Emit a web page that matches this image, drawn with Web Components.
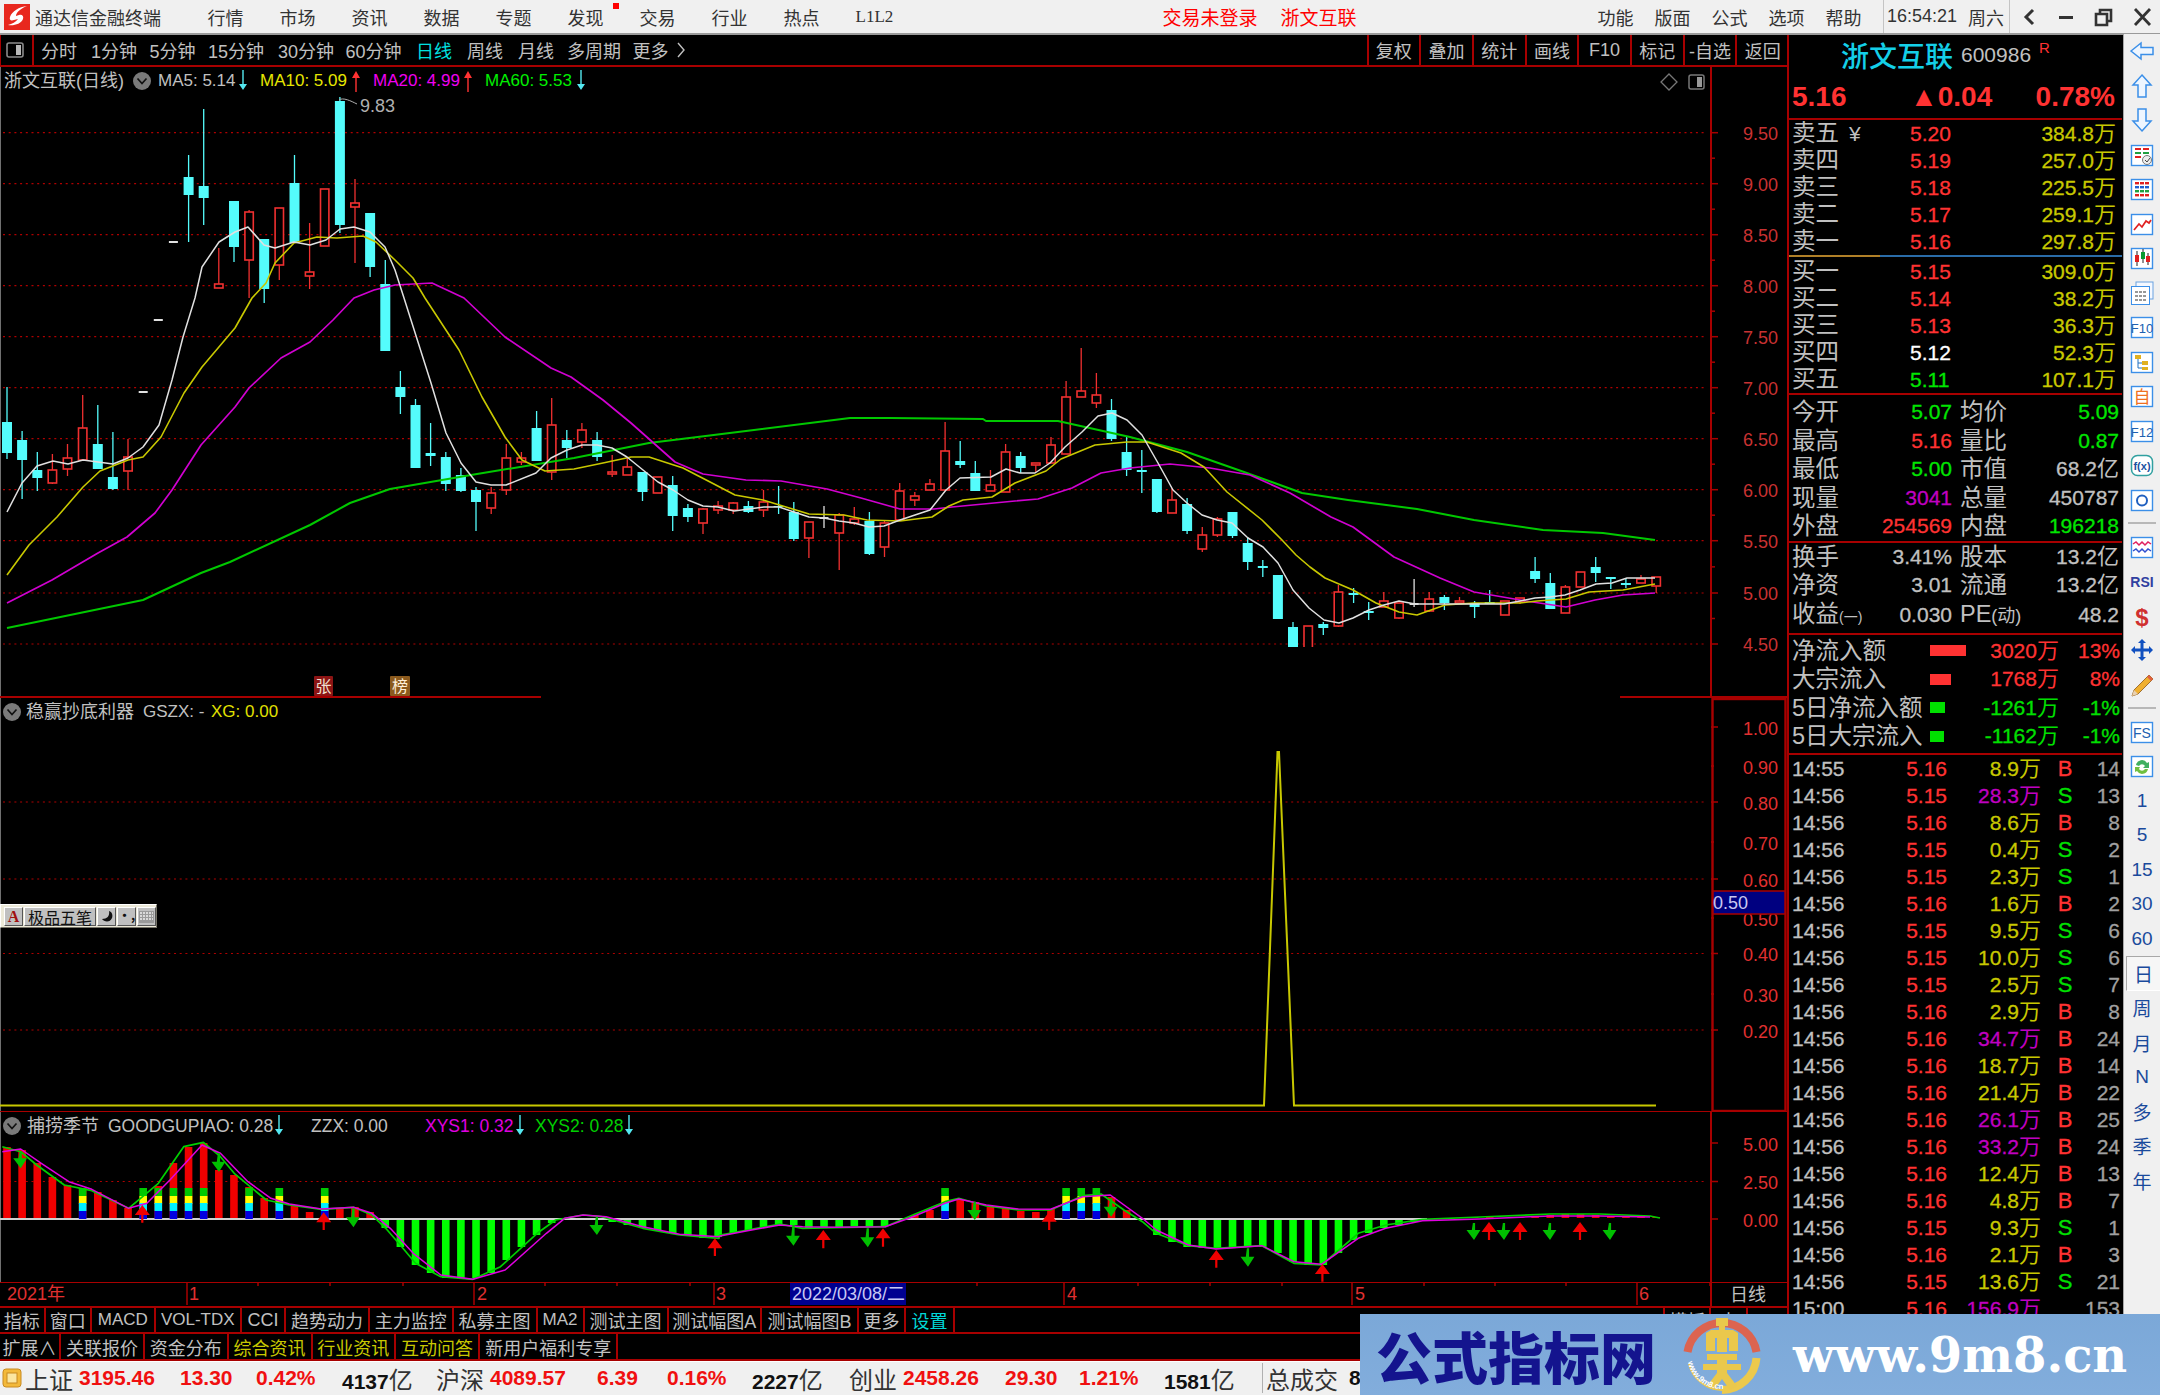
<!DOCTYPE html>
<html lang="zh"><head><meta charset="utf-8"><title>通达信金融终端</title>
<style>
html,body{margin:0;padding:0;background:#000;overflow:hidden;font-family:"Liberation Sans","Noto Sans CJK SC",sans-serif}
</style></head><body>
<tdx-app>
  <tdx-titlebar slot="title"></tdx-titlebar>
  <div slot="left">
    <tdx-periodbar></tdx-periodbar>
    <tdx-price-pane></tdx-price-pane>
    <tdx-signal-pane></tdx-signal-pane>
    <tdx-season-pane></tdx-season-pane>
    <tdx-daterow></tdx-daterow>
    <tdx-tabrow h="26">
      <tdx-tab w="45.5">指标</tdx-tab><tdx-tab w="46.5">窗口</tdx-tab><tdx-tab w="63.6" fs="17">MACD</tdx-tab><tdx-tab w="86.4" fs="17">VOL-TDX</tdx-tab><tdx-tab w="44">CCI</tdx-tab><tdx-tab w="84">趋势动力</tdx-tab><tdx-tab w="83.6">主力监控</tdx-tab><tdx-tab w="84">私募主图</tdx-tab><tdx-tab w="47" fs="17">MA2</tdx-tab><tdx-tab w="84">测试主图</tdx-tab><tdx-tab w="93.5">测试幅图A</tdx-tab><tdx-tab w="96.7">测试幅图B</tdx-tab><tdx-tab w="47.7">更多</tdx-tab><tdx-tab w="48.2" c="#00d8d8">设置</tdx-tab><tdx-tab w="710.4"></tdx-tab><tdx-tab w="46">模板</tdx-tab><tdx-tab w="37">十</tdx-tab>
    </tdx-tabrow>
    <tdx-tabrow h="27">
      <tdx-tab w="61">扩展∧</tdx-tab><tdx-tab w="84">关联报价</tdx-tab><tdx-tab w="83.6">资金分布</tdx-tab><tdx-tab w="84" c="#c8c800">综合资讯</tdx-tab><tdx-tab w="83.3" c="#c8c800">行业资讯</tdx-tab><tdx-tab w="84" c="#c8c800">互动问答</tdx-tab><tdx-tab w="138.5">新用户福利专享</tdx-tab>
    </tdx-tabrow>
  </div>
  <tdx-quote slot="quote"></tdx-quote>
  <tdx-sidebar slot="side"></tdx-sidebar>
  <tdx-statusbar slot="status"></tdx-statusbar>
  <tdx-ime slot="overlay"></tdx-ime>
  <tdx-banner slot="overlay"></tdx-banner>
</tdx-app>
<script>
const FONT='"Liberation Sans","Noto Sans CJK SC",sans-serif';
const RED='#ff3232',AX='#a80000',GRID='#b00000',CY='#54fcfc';
function reg(name,render){customElements.define(name,class extends HTMLElement{connectedCallback(){if(!this.shadowRoot){this.attachShadow({mode:'open'}).innerHTML=render(this);}}});}

reg('tdx-app',()=>`<style>
:host{display:grid;width:2160px;height:1395px;position:relative;overflow:hidden;background:#000;grid-template-columns:1788px 335px 37px;grid-template-rows:35px 1324px 36px}
.t{grid-column:1/4}.s{grid-column:1/4}
.side{grid-row:2/4;grid-column:3}
.st{grid-row:3;grid-column:1/3}
</style>
<div class="t"><slot name="title"></slot></div>
<div class="l"><slot name="left"></slot></div>
<div class="q"><slot name="quote"></slot></div>
<div class="side"><slot name="side"></slot></div>
<div class="st"><slot name="status"></slot></div>
<slot name="overlay"></slot>`);

/* ---------- title bar ---------- */
reg('tdx-titlebar',()=>{
 const menu=['行情','市场','资讯','数据','专题','发现','交易','行业','热点','L1L2'];
 const m2=['功能','版面','公式','选项','帮助'];
 return `<style>
:host{display:flex;align-items:center;height:35px;box-sizing:border-box;background:#f0f0f0;border-bottom:2px solid #9a9a9a;color:#333;font:18px ${FONT}}
svg{display:block;flex:none}
.logo{margin-left:4px}.name{margin-left:5px;width:172.5px;flex:none}
.m{display:flex;gap:36px;align-items:center}.m span{width:36px;position:relative;white-space:nowrap}
.m i{position:absolute;left:45px;top:-1px;width:6px;height:6px;background:#f00;margin-top:0}
.red{color:#f00;font-size:19px;white-space:nowrap}
.r{margin-left:auto;display:flex;align-items:center}
.m2{display:flex;gap:21px;margin-right:21.5px}
.clk{border-left:1px solid #c4c4c4;border-right:1px solid #c4c4c4;height:33px;display:flex;align-items:center;padding:0 5px 0 3px;gap:11px;white-space:nowrap}
.win{display:flex;align-items:center;margin-right:-2px}
.win svg{width:38px;height:24px}
.l12{font-size:17px;line-height:22px;font-family:"Liberation Serif",serif}
</style>
<svg class="logo" width="26" height="26" viewBox="0 0 26 26"><rect width="26" height="26" fill="#e8281e"/><path d="M23 2C15 3 8 7 6 13c-1 3 1 4 4 3l4-1c-2 3-6 5-10 6 6 1 13-1 15-6 1-3-1-5-4-4l-3 1c0-4 6-8 11-10z" fill="#fff"/></svg>
<div class="name">通达信金融终端</div>
<div class="m">${menu.map(t=>`<span class="${t=='L1L2'?'l12':''}">${t}${t=='发现'?'<i></i>':''}</span>`).join('')}</div>
<span class="red" style="margin-left:271px">交易未登录</span><span class="red" style="margin-left:23px">浙文互联</span>
<div class="r"><div class="m2">${m2.map(t=>`<span>${t}</span>`).join('')}</div>
<div class="clk"><span>16:54:21</span><span>周六</span></div>
<div class="win">
<svg viewBox="0 0 38 24"><path d="M23 5l-7 7 7 7" fill="none" stroke="#333" stroke-width="3"/></svg>
<svg viewBox="0 0 38 24"><rect x="11" y="11" width="14" height="3" fill="#333"/></svg>
<svg viewBox="0 0 38 24"><path d="M10 9h11v11H10z M14 9V5h11v11h-4" fill="none" stroke="#333" stroke-width="2.6"/></svg>
<svg viewBox="0 0 38 24"><path d="M11 4l15 16M26 4L11 20" fill="none" stroke="#333" stroke-width="2.8"/></svg>
</div></div>`});

/* ---------- period toolbar ---------- */
reg('tdx-periodbar',()=>{
 const p=[['分时',42],['1分钟',92],['5分钟',150.6],['15分钟',209],['30分钟',279],['60分钟',346.6],['日线',417],['周线',468],['月线',519],['多周期',568],['更多',633.6]];
 const r=['复权','叠加','统计','画线','F10','标记','-自选','返回'];
 let left=`<div class="ic"><svg width="18" height="16" viewBox="0 0 18 16"><rect x="1" y="1" width="16" height="14" rx="2" fill="none" stroke="#8a8a8a" stroke-width="1.6"/><rect x="10" y="3" width="5" height="10" fill="#b8b8b8"/></svg></div>`;
 let items=p.map((a,i)=>{const nx=i<p.length-1?p[i+1][1]:680;return `<span style="width:${nx-a[1]}px;color:${a[0]=='日线'?'#00e0e0':'#c0c0c0'}">${a[0]}</span>`}).join('');
 return `<style>
:host{display:flex;height:32px;box-sizing:border-box;background:#000;border-bottom:2px solid ${AX};color:#c0c0c0;font:18px ${FONT};align-items:center}
.ic{width:34px;height:30px;box-sizing:border-box;border-right:2px solid ${AX};border-left:1px solid ${AX};display:flex;align-items:center;justify-content:center;padding-right:3px;flex:none}
.p{display:flex;padding-left:7px;width:640px;flex:none}.p span{white-space:nowrap;flex:none}
.r{margin-left:auto;display:flex;height:30px}
.r span{width:50.7px;border-left:2px solid ${AX};display:flex;align-items:center;justify-content:center;white-space:nowrap}
</style>${left}<div class="p">${items}</div>
<svg style="margin-left:-4px" width="9" height="16" viewBox="0 0 9 16"><path d="M1 1l6 7-6 7" fill="none" stroke="#c0c0c0" stroke-width="1.4"/></svg>
<div class="r">${r.map(t=>`<span>${t}</span>`).join('')}</div>`});

/* ---------- svg helpers ---------- */
const T=(x,y,s,c,a='start',sz=18)=>`<text x="${x}" y="${y}" fill="${c}" text-anchor="${a}" font-size="${sz}" dominant-baseline="central">${s}</text>`;
const L=(x1,y1,x2,y2,c,w=1,extra='')=>`<line x1="${x1}" y1="${y1}" x2="${x2}" y2="${y2}" stroke="${c}" stroke-width="${w}" ${extra}/>`;
const DOT='stroke-dasharray="2 3.7"';
const PL=(pts,c,w=1.6)=>`<polyline points="${pts.map(p=>p.map(v=>+v.toFixed(1)).join(',')).join(' ')}" fill="none" stroke="${c}" stroke-width="${w}" stroke-linejoin="round"/>`;
const SX=i=>7+15.13*i;

/* candle data: index, body top, body bottom, wick top, wick bottom, kind */
const CD=[[0,422,453,387,459,'c'],[1,440,460,431,499,'c'],[2,470,478,452,491,'c'],[3,470,483,454,484,'r'],[4,458,469,444,476,'r'],[5,428,460,395,460,'r'],[6,444,469,405,469,'c'],[7,477,489,432,490,'c'],[8,457,471,439,490,'r'],
[9,391,393,391,393,'w'],[10,319,321,319,321,'w'],[11,241,243,241,243,'w'],
[12,177,195,155,242,'c'],[13,186,198,109,225,'c'],[14,284,288,248,288,'r'],[15,201,247,201,262,'c'],[16,212,260,210,298,'r'],[17,239,289,239,303,'c'],[18,208,265,208,280,'r'],[19,183,243,155,243,'c'],[20,272,276,223,289,'r'],[21,189,246,189,246,'r'],[22,101,225,97,233,'c'],[23,203,207,179,263,'r'],[24,213,267,213,277,'c'],[25,284,351,260,351,'c'],[26,387,397,371,414,'c'],[27,405,468,399,468,'c'],[28,453,456,423,466,'c'],[29,457,484,452,491,'c'],[30,475,491,468,492,'c'],[31,490,502,487,531,'c'],[32,493,508,487,514,'r'],[33,458,490,444,495,'r'],[34,458,462,452,465,'r'],[35,428,461,411,461,'c'],[36,425,472,398,480,'r'],[37,440,448,430,458,'c'],[38,430,442,423,448,'r'],[39,440,457,432,461,'c'],[40,472,474,455,477,'r'],[41,467,475,457,475,'r'],[42,472,492,472,501,'c'],[43,477,493,477,493,'r'],[44,485,516,476,531,'c'],[45,508,517,504,522,'c'],[46,509,523,508,534,'r'],[47,506,510,501,514,'r'],[48,503,510,502,514,'r'],[49,506,512,501,513,'c'],[50,502,510,490,517,'r'],[51,506,507,486,514,'c'],[52,512,539,502,541,'c'],[53,522,538,522,558,'r'],[54,517,519,506,528,'w'],[55,515,533,513,570,'r'],[56,519,523,507,525,'r'],[57,521,554,512,555,'c'],[58,523,547,521,557,'r'],[59,491,520,483,520,'r'],[60,496,500,492,506,'r'],[61,484,490,479,490,'r'],[62,451,490,422,490,'r'],[63,461,465,441,468,'c'],[64,473,491,461,491,'c'],[65,485,491,470,491,'r'],[66,452,492,444,492,'r'],[67,456,468,452,473,'c'],[68,463,465,463,472,'r'],[69,445,463,437,463,'r'],[70,397,454,381,454,'r'],[71,391,397,348,397,'r'],[72,395,403,373,408,'r'],[73,410,439,399,441,'c'],[74,452,470,437,476,'c'],[75,470,472,450,493,'c'],[76,479,512,479,513,'c'],[77,500,513,488,513,'r'],[78,504,531,498,534,'c'],[79,535,549,527,552,'r'],[80,519,535,517,537,'r'],[81,512,536,512,538,'c'],[82,543,562,537,570,'c'],[83,566,568,560,577,'c'],[84,575,619,575,619,'c'],[85,627,648,622,648,'c'],[86,626,648,626,648,'r'],[87,624,628,622,635,'c'],[88,592,626,585,627,'r'],[89,593,595,588,603,'c'],[90,611,613,602,620,'c'],[91,601,607,592,607,'r'],[92,603,618,603,619,'r'],[93,603,605,579,607,'w'],[94,599,611,592,612,'r'],[95,597,603,595,610,'c'],[96,601,603,597,603,'r'],[97,603,607,601,618,'c'],[98,602,604,590,604,'c'],[99,601,615,601,615,'r'],[100,598,602,598,604,'r'],[101,571,579,557,583,'c'],[102,583,609,573,609,'c'],[103,587,613,585,613,'r'],[104,572,587,572,587,'r'],[105,567,573,557,582,'c'],[106,577,579,577,589,'c'],[107,583,585,578,588,'c'],[108,579,583,575,583,'r'],[109,577,586,577,593,'r']];
const MA5=[[7,512],[22,483],[37,466],[53,461],[68,464],[83,460],[98,462],[113,464],[128,458],[143,447],[159,425],[172,380],[183,337],[195,298],[202,267],[219,242],[235,232],[248,227],[264,245],[275,248],[294,242],[310,245],[326,240],[340,229],[354,227],[370,232],[385,247],[395,270],[404,298],[431,383],[446,433],[461,463],[476,482],[491,485],[506,485],[536,473],[551,458],[567,450],[582,445],[597,445],[612,448],[627,457],[643,470],[658,482],[673,490],[688,500],[703,506],[718,507],[734,511],[749,509],[764,507],[779,507],[794,512],[809,517],[824,518],[839,521],[854,523],[869,527],[884,526],[900,520],[915,515],[930,510],[946,490],[960,478],[991,477],[1006,469],[1020,473],[1035,473],[1050,463],[1065,447],[1082,432],[1098,416],[1112,413],[1127,420],[1142,435],[1158,463],[1173,490],[1187,503],[1202,515],[1217,520],[1232,523],[1248,538],[1263,547],[1278,563],[1293,590],[1309,608],[1324,620],[1339,623],[1353,618],[1369,610],[1384,605],[1399,601],[1415,604],[1460,604],[1504,604],[1520,601],[1535,598],[1550,597],[1565,595],[1580,590],[1596,584],[1612,583],[1627,578],[1655,578]];
const MA10=[[7,575],[29,545],[57,517],[83,487],[100,471],[128,460],[143,457],[161,437],[184,393],[202,367],[235,328],[252,298],[266,283],[275,263],[294,243],[317,237],[337,238],[363,236],[376,242],[395,260],[413,278],[425,298],[459,350],[482,397],[505,437],[522,460],[545,471],[574,469],[603,463],[631,457],[649,457],[683,468],[712,483],[735,495],[763,500],[786,507],[809,514],[844,515],[867,520],[900,521],[932,517],[949,506],[963,500],[992,497],[1015,483],[1046,471],[1061,459],[1095,445],[1127,442],[1147,442],[1181,453],[1204,467],[1227,492],[1262,520],[1282,540],[1296,555],[1310,567],[1325,578],[1353,590],[1376,603],[1399,612],[1417,615],[1445,605],[1474,603],[1520,603],[1537,601],[1566,599],[1589,592],[1623,590],[1655,584]];
const MA20=[[7,603],[52,580],[98,553],[127,537],[155,513],[172,490],[201,445],[235,407],[249,388],[281,358],[310,342],[333,320],[354,298],[374,290],[395,285],[432,283],[464,298],[505,337],[551,368],[571,377],[603,400],[631,423],[675,462],[703,474],[746,480],[781,481],[827,489],[861,498],[900,509],[934,509],[952,507],[1015,501],[1038,499],[1072,488],[1101,473],[1130,468],[1170,464],[1210,468],[1250,475],[1290,493],[1331,517],[1353,527],[1394,557],[1440,578],[1474,592],[1526,601],[1566,607],[1595,600],[1623,595],[1655,593]];
const MA60=[[7,628],[143,600],[201,573],[230,562],[310,525],[350,503],[390,489],[471,475],[574,458],[649,443],[746,431],[850,418],[890,418],[983,419],[986,421],[1058,421],[1130,437],[1187,452],[1244,472],[1302,493],[1348,500],[1417,509],[1474,520],[1543,530],[1603,533],[1655,540]];

/* ---------- legend ---------- */
reg('tdx-legend',()=>`<style>:host{position:absolute;left:0;top:0;right:0;display:flex;align-items:center;font:18px ${FONT};white-space:nowrap;color:#c0c0c0;height:28px}</style><slot></slot>`);
reg('tdx-lg',h=>{
 const w=h.getAttribute('w'),c=h.getAttribute('c')||'#c0c0c0',ar=h.getAttribute('ar'),fs=h.getAttribute('fs')||18;
 const arrow=ar?`<svg width="8" height="22" viewBox="0 0 8 22" style="position:absolute;right:${h.getAttribute('ax')||0}px;top:3px">${ar=='d'?`<path d="M3.3 0h1.4v14H8L4 20 0 14h3.3z" fill="#54e8f0"/>`:`<path d="M3.3 22h1.4V8H8L4 1 0 8h3.3z" fill="#ff3232"/>`}</svg>`:'';
 return `<style>:host{display:block;flex:none;width:${w}px;color:${c};font-size:${fs}px;position:relative;height:28px;line-height:28px}</style><slot></slot>${arrow}`});
reg('tdx-updown',()=>`<style>:host{display:block;flex:none;width:18px;height:18px;border-radius:50%;background:#7a7a7a;position:relative}svg{position:absolute;left:3px;top:5px}</style><svg width="12" height="9" viewBox="0 0 12 9"><path d="M1.5 1.5L6 6.5l4.5-5" fill="none" stroke="#111" stroke-width="1.7"/></svg>`);

/* ---------- price pane ---------- */
reg('tdx-price-pane',()=>{
 const gy=[132.7,183.7,234.7,285.7,336.7,387.7,438.7,489.7,540.7,593,644];
 const lb=['9.50','9.00','8.50','8.00','7.50','7.00','6.50','6.00','5.50','5.00','4.50'];
 let s='';
 s+=L(0.5,67,0.5,698,'#707070',1);
 gy.forEach((y,i)=>{
  s+=L(3,y,1707,y,GRID,1.2,DOT);
  s+=L(1711,y,1718,y,AX,1.5);
  s+=T(1778,y+1,lb[i],'#c83232','end');
  if(i<gy.length-1){const m=(y+gy[i+1])/2;s+=L(1711,m,1715,m,AX,1.5);}
 });
 CD.forEach(([i,a,b,t,u,k])=>{
  const x=+SX(i).toFixed(1);
  if(k=='w'){s+=L(x,t,x,u,'#e0e0e0',1.3)+`<rect x="${x-4.5}" y="${a}" width="9" height="2" fill="#e0e0e0"/>`;return;}
  const col=k=='c'?CY:'#f03030';
  if(t<a)s+=L(x,t,x,a,col,1.3);
  if(u>b)s+=L(x,b,x,u,col,1.3);
  if(k=='c')s+=`<rect x="${x-5}" y="${a}" width="10" height="${b-a}" fill="${CY}"/>`;
  else s+=`<rect x="${x-4.2}" y="${a}" width="8.4" height="${b-a}" fill="#000" stroke="${col}" stroke-width="1.6"/>`;
 });
 s+=PL(MA60,'#00c800',2)+PL(MA20,'#d000d0',1.7)+PL(MA10,'#c8c800',1.6)+PL(MA5,'#e0e0e0',1.5);
 s+=`<rect x="541" y="647" width="1079" height="52" fill="#000"/>`;
 s+=L(0,697,541,697,AX,2)+L(1620,697,1788,697,AX,2)+L(1711,67,1711,698,AX,2);
 s+=`<path d="M339 100c4-3 12 1 18 4" fill="none" stroke="#b0b0b0" stroke-width="1"/>`+T(360,106,'9.83','#b0b0b0');
 s+=`<rect x="314" y="676" width="19" height="20" fill="#8c1414" rx="1"/>`+T(323.5,686,'张','#f0e0d0','middle',16);
 s+=`<rect x="390" y="676" width="20" height="20" fill="#8b5a1e" rx="1"/>`+T(400,686,'榜','#fff0d8','middle',16);
 s+=`<path d="M1669 74l8 8-8 8-8-8z" fill="none" stroke="#777" stroke-width="1.3"/><rect x="1689" y="75" width="15" height="14" rx="2" fill="none" stroke="#777" stroke-width="1.5"/><rect x="1697" y="77" width="5" height="10" fill="#999"/>`;
 return `<style>:host{display:block;position:relative;height:631px;font-family:${FONT}}svg{display:block}
.pad{flex:none;width:4px}</style>
<svg width="1788" height="631" viewBox="0 67 1788 631">${s}</svg>
<tdx-legend><span class="pad"></span><tdx-lg w="124">浙文互联(日线)</tdx-lg><span style="width:5px;flex:none"></span><tdx-updown></tdx-updown><span style="width:7px;flex:none"></span>
<tdx-lg w="102" fs="17" ar="d" ax="13">MA5: 5.14</tdx-lg><tdx-lg w="113" fs="17" c="#e6e600" ar="u" ax="13">MA10: 5.09</tdx-lg><tdx-lg w="112" fs="17" c="#f000f0" ar="u" ax="13">MA20: 4.99</tdx-lg><tdx-lg w="112" fs="17" c="#00f000" ar="d" ax="12">MA60: 5.53</tdx-lg></tdx-legend>`});

/* ---------- signal pane ---------- */
reg('tdx-signal-pane',()=>{
 const rows=[['1.00',727,1],['0.90',766,0],['0.80',802,1],['0.70',842,0],['0.60',879,1],['0.50',918,0],['0.40',953.5,1],['0.30',994,0],['0.20',1030,1]];
 let s=L(0.5,698,0.5,1112,'#707070',1);
 rows.forEach(([t,y,major])=>{
  if(major&&t!='1.00')s+=L(3,y,1707,y,GRID,1.2,DOT);
  s+=L(1711,y,major?1718:1714,y,AX,1.5);
  s+=T(1778,y+1.5,t,'#e03030','end');
 });
 s+=`<polyline points="0,1105.500 1264,1105.500 1277.500,752 1279,752 1294,1105.500 1656,1105.500" fill="none" stroke="#c8c800" stroke-width="2"/>`;
 s+=`<rect x="1712.5" y="699" width="73" height="412" fill="none" stroke="${AX}" stroke-width="2.4"/>`;
 s+=L(0,1112,1788,1112,AX,2);
 s+=`<rect x="1713" y="891" width="72" height="23" fill="#000080" stroke="${AX}" stroke-width="1.5"/>`+T(1713,902.5,'0.50','#c8c8f0');
 return `<style>:host{display:block;position:relative;height:414px;font-family:${FONT}}svg{display:block}</style>
<svg width="1788" height="414" viewBox="0 698 1788 414">${s}</svg>
<tdx-legend><span style="width:3px;flex:none"></span><tdx-updown></tdx-updown><span style="width:5px;flex:none"></span><tdx-lg w="117">稳赢抄底利器</tdx-lg><tdx-lg w="68" fs="17">GSZX: -</tdx-lg><tdx-lg w="80" fs="17" c="#e0e000">XG: 0.00</tdx-lg></tdx-legend>`});

/* ---------- season pane ---------- */
reg('tdx-season-pane',()=>{
 const H=[1147,1150,1163,1177,1185,1188,1192,1200,1208,1208,1186,1163,1147,1143,1170,1175,1187,1198,1203,1205,1212,1208,1208,1207,1212,1228,1247,1265,1273,1278,1279,1278,1273,1260,1247,1235,1223,1219,1219,1219,1222,1225,1228,1230,1233,1236,1238,1237,1233,1230,1227,1224,1225,1228,1228,1227,1226,1227,1226,1220,1215,1210,1202,1200,1202,1207,1208,1211,1212,1209,1205,1198,1196,1197,1210,1220,1235,1242,1247,1248,1248,1247,1247,1247,1253,1262,1265,1265,1253,1240,1233,1228,1225,1222,1220,1219,1218,1217,1217,1218,1217,1216,1215,1214,1214,1215,1216,1216,1216,1217];
 const STK=new Set([5,9,10,11,12,13,16,18,21,62,70,71,72]);
 const z6=a=>a.map(([x,y])=>[x/2.178,1100+y/3]),z7=a=>a.map(([x,y])=>[720+x/2.178,1100+y/3]);
 const tail=[[1480,1217],[1550,1214],[1600,1214],[1650,1216],[1660,1218]];
 const G=[...z6([[5,140],[45,155],[80,195],[140,255],[200,272],[280,325],[345,250],[400,140],[443,127],[480,170],[510,220],[545,260],[580,300],[630,315],[700,328],[770,322],[810,345],[840,385],[875,440],[905,490],[960,530],[1030,538],[1090,500],[1170,400],[1210,360],[1270,345],[1310,350],[1400,385],[1480,405],[1566,415]]),...z7([[0,405],[60,390],[130,372],[180,385],[250,383],[360,380],[420,345],[490,305],[520,295],[580,318],[650,330],[720,330],[790,287],[830,282],[880,330],[920,365],[950,400],[1020,437],[1080,445],[1180,437],[1250,490],[1310,495],[1390,400],[1450,375],[1530,358]]),...tail];
 const M=[...z6([[5,155],[45,147],[90,190],[150,245],[200,268],[280,325],[320,310],[370,240],[440,135],[480,160],[540,245],[590,295],[630,312],[700,327],[770,322],[810,340],[850,385],[900,460],[960,525],[1030,538],[1100,510],[1190,400],[1230,355],[1270,345],[1320,350],[1400,380],[1480,403],[1566,410]]),...z7([[0,408],[60,392],[130,375],[180,380],[250,382],[360,380],[420,350],[490,310],[520,297],[580,315],[650,327],[720,328],[790,290],[850,285],[920,355],[950,390],[1020,435],[1080,447],[1180,437],[1250,485],[1310,493],[1390,415],[1450,385],[1530,362]]),[1480,1219],[1550,1216],[1600,1216],[1650,1217]];
 let s=L(0.5,1112,0.5,1282,'#707070',1);
 s+=L(3,1181.5,1707,1181.5,GRID,1.2,DOT);
 [['5.00',1143],['2.50',1181.5],['0.00',1219]].forEach(([t,y])=>{s+=L(1711,y,1718,y,AX,1.5)+T(1778,y+1.5,t,'#e03030','end');});
 s+=L(1711,1112,1711,1282,AX,2);
 s+=L(0,1219,1427,1219,'#d0d0d0',2);
 H.forEach((y,i)=>{
  const x=SX(i)-3.8;
  if(y<1219)s+=`<rect x="${x}" y="${y}" width="7.6" height="${1218-y}" fill="#f00000"/>`;
  else if(y>1219)s+=`<rect x="${x}" y="1220" width="7.6" height="${y-1220}" fill="#00ff00"/>`;
  if(STK.has(i))[['#00c800',1188],['#ffff00',1196],['#00f0ff',1203],['#0000e0',1211]].forEach(([c,t])=>{s+=`<rect x="${x}" y="${t}" width="7.6" height="8" fill="${c}"/>`;});
 });
 s+=PL(G,'#00d000',1.7)+PL(M,'#e000e0',1.5);
 const up=(x,t,b)=>`<path d="M${x} ${t}l7.5 10h-6.4V${b}h-2.2V${t+10}h-6.4z" fill="#f00000"/>`;
 const dn=(x,t,b)=>`<path d="M${x-1.1} ${t}h2.2V${b-10}h5.3L${x} ${b}l-7.5-10h5.3z" fill="#00c000"/>`;
 [[45,155,205],[477,160,215],[770,325,382],[1300,350,405]].forEach(([x,a,b])=>s+=dn(+(x/2.178).toFixed(1),1100+a/3,1100+b/3));
 [[310,315,368],[705,337,390],[1557,415,468]].forEach(([x,a,b])=>s+=up(+(x/2.178).toFixed(1),1100+a/3,1100+b/3));
 [[160,375,437],[322,385,442],[555,305,360],[852,295,350],[1150,445,500]].forEach(([x,a,b])=>s+=dn(+(720+x/2.178).toFixed(1),1100+a/3,1100+b/3));
 [[225,390,445],[355,385,440],[717,335,390],[1081,450,503],[1312,492,545]].forEach(([x,a,b])=>s+=up(+(720+x/2.178).toFixed(1),1100+a/3,1100+b/3));
 [1474,1504,1550,1610].forEach(x=>s+=dn(x,1223,1240));
 [1489,1520,1580].forEach(x=>s+=up(x,1222,1240));
 return `<style>:host{display:block;position:relative;height:170px;font-family:${FONT}}svg{display:block}</style>
<svg width="1788" height="170" viewBox="0 1112 1788 170">${s}</svg>
<tdx-legend><span style="width:3px;flex:none"></span><tdx-updown></tdx-updown><span style="width:6px;flex:none"></span><tdx-lg w="81">捕捞季节</tdx-lg><tdx-lg w="203" fs="17.5" ar="d" ax="28">GOODGUPIAO: 0.28</tdx-lg><tdx-lg w="114" fs="17.5">ZZX: 0.00</tdx-lg><tdx-lg w="110" fs="17.5" c="#e000e0" ar="d" ax="11">XYS1: 0.32</tdx-lg><tdx-lg w="100" fs="17.5" c="#00d000" ar="d" ax="2">XYS2: 0.28</tdx-lg></tdx-legend>`});

/* ---------- date row ---------- */
reg('tdx-daterow',()=>{
 let s=L(0,1282,1788,1282,AX,2);
 [258,330,403,545,617,690,977,1138,1210,1282,1424,1495,1566,1710].forEach(x=>s+=L(x,1282,x,1286,AX,1.5));
 [[187,'1',189],[474,'2',477],[714,'3',716],[1064,'4',1067],[1352,'5',1355],[1637,'6',1639]].forEach(([x,t,tx])=>{s+=L(x,1282,x,1305,AX,1.5)+T(tx,1294,t,'#e03030');});
 s+=T(7,1294,'2021年','#e03030');
 s+=`<rect x="790" y="1283" width="116" height="22" fill="#000090"/>`+T(792,1294,'2022/03/08/二','#c8c8f4');
 s+=L(1711,1282,1711,1306,AX,2)+T(1730,1295,'日线','#c0c0c0');
 return `<style>:host{display:block;height:24px;font-family:${FONT}}svg{display:block}</style><svg width="1788" height="24" viewBox="0 1282 1788 24">${s}</svg>`});

/* ---------- tabs ---------- */
reg('tdx-tabrow',h=>`<style>:host{display:flex;height:${h.getAttribute('h')}px;box-sizing:border-box;border-top:2px solid ${AX};background:#000;overflow:hidden}</style><slot></slot>`);
reg('tdx-tab',h=>`<style>:host{display:flex;align-items:center;justify-content:center;flex:none;box-sizing:border-box;width:${h.getAttribute('w')}px;border-right:2px solid ${AX};color:${h.getAttribute('c')||'#c0c0c0'};font:${h.getAttribute('fs')||18}px ${FONT};white-space:nowrap}</style><slot></slot>`);

/* ---------- quote panel ---------- */
reg('tdx-quote',()=>{
 const sell=[['卖五','5.20','384.8',RED],['卖四','5.19','257.0',RED],['卖三','5.18','225.5',RED],['卖二','5.17','259.1',RED],['卖一','5.16','297.8',RED]];
 const buy=[['买一','5.15','309.0',RED],['买二','5.14','38.2',RED],['买三','5.13','36.3',RED],['买四','5.12','52.3','#fff'],['买五','5.11','107.1','#00e600']];
 const ord=a=>a.map(([l,p,q,c])=>`<div class="o"><span class="lb">${l}${l=='卖五'?'<em>¥</em>':''}</span><span class="n" style="color:${c}">${p}</span><span class="n q">${q}<u>万</u></span></div>`).join('');
 const G='#00e600',Y='#c0c0c0';
 const s1=[['今开','5.07',G,'均价','5.09',G],['最高','5.16',RED,'量比','0.87',G],['最低','5.00',G,'市值','68.2<u>亿</u>',Y],['现量','3041','#c000c0','总量','450787',Y],['外盘','254569',RED,'内盘','196218',G]];
 const s2=[['换手','3.41%',Y,'股本','13.2<u>亿</u>',Y],['净资','3.01',Y,'流通','13.2<u>亿</u>',Y],['收益<small>(一)</small>','0.030',Y,'PE<s>(动)</s>','48.2',Y]];
 const st=a=>a.map(([a1,b1,c1,a2,b2,c2])=>`<div class="s"><span class="lb">${a1}</span><span class="n r" style="color:${c1}">${b1}</span><span class="lb" style="margin-left:8px">${a2}</span><span class="n r" style="color:${c2}">${b2}</span></div>`).join('');
 const fl=[['净流入额',36,'3020','13%',RED],['大宗流入',21,'1768','8%',RED],['5日净流入额',15,'-1261','-1%','#00e000'],['5日大宗流入',14,'-1162','-1%','#00e000']];
 const flow=fl.map(([l,w,v,p,c])=>`<div class="f"><span class="lb">${l}</span><i style="width:${w}px;background:${c}"></i><span class="n r" style="color:${c}">${v}<u>万</u></span><span class="n r" style="color:${c}">${p}</span></div>`).join('');
 const Yv='#c8c800',Pv='#c000c0';
 const tk=[['14:55','5.16','8.9','B',14],['14:56','5.15','28.3','S',13,1],['14:56','5.16','8.6','B',8],['14:56','5.15','0.4','S',2],['14:56','5.15','2.3','S',1],['14:56','5.16','1.6','B',2],['14:56','5.15','9.5','S',6],['14:56','5.15','10.0','S',6],['14:56','5.15','2.5','S',7],['14:56','5.16','2.9','B',8],['14:56','5.16','34.7','B',24,1],['14:56','5.16','18.7','B',14],['14:56','5.16','21.4','B',22],['14:56','5.16','26.1','B',25,1],['14:56','5.16','33.2','B',24,1],['14:56','5.16','12.4','B',13],['14:56','5.16','4.8','B',7],['14:56','5.15','9.3','S',1],['14:56','5.16','2.1','B',3],['14:56','5.15','13.6','S',21],['15:00','5.16','156.9','',153,1]];
 const ticks=tk.map(([t,p,v,b,n,big])=>`<div class="t"><span class="n tm">${t}</span><span class="n r" style="color:${RED}">${p}</span><span class="n r" style="color:${big?Pv:Yv}">${v}<u>万</u></span><span class="n bs" style="color:${b=='B'?RED:'#00e000'}">${b}</span><span class="n r" style="color:#a0a0a0">${n}</span></div>`).join('');
 return `<style>
:host{display:block;width:335px;height:1324px;box-sizing:border-box;border-left:2px solid ${AX};background:#000;color:#c0c0c0;font:24px ${FONT};overflow:hidden;margin-left:-1px;}
.head{height:40px;display:flex;align-items:center;padding-left:52px;position:relative}
.head b{font-weight:500;font-size:28px;color:#14cfe8;width:120px;flex:none;white-space:nowrap}
.head span{font-size:21px;width:78px;flex:none}.head sup{font-size:15px;color:${RED};position:relative;top:-8px}
.price{box-sizing:border-box;display:grid;grid-template-columns:118px 1fr auto;align-items:center;padding:0 7px 0 3px;font-weight:700;font-size:28px;color:${RED};border-bottom:2px solid ${AX};height:45px}
.sec{box-sizing:border-box;border-bottom:2px solid ${AX}}
.split{height:2px;background:linear-gradient(90deg,#b08028 0,#b08028 91px,#2a6ca8 91px)}
.o{height:27px;display:grid;grid-template-columns:118px auto 1fr;padding:0 6px 0 3px;align-items:center;line-height:27px}
.s{height:28.5px;display:grid;grid-template-columns:60px 100px 68px 1fr;padding:0 3px 0 3px;align-items:center;line-height:28.5px}
.f{height:28.5px;display:grid;grid-template-columns:138px 36px 93px 1fr;padding:0 2px 0 3px;align-items:center;line-height:28.5px}
.f i{display:block;height:11px}
.t{height:27px;display:grid;grid-template-columns:60px 95px 94px 48px 31px;padding-left:3px;align-items:center;line-height:27px}
.lb{white-space:nowrap;font-size:23.5px;line-height:inherit}.lb em{font-style:normal;font-size:21px;margin-left:10px}
.lb small{font-size:14px}.lb s{text-decoration:none;font-size:18px}
.n{font-size:21px;white-space:nowrap;-webkit-text-stroke:.3px currentColor}.r{text-align:right;justify-self:end}.q{text-align:right;justify-self:end;color:${Yv}}
u{text-decoration:none;font-size:22px;margin-left:0;-webkit-text-stroke:0}
.bs{text-align:center;font-size:22px}
.tm{color:#c0c0c0}
</style>
<div class="head"><b>浙文互联</b><span>600986</span><sup>R</sup></div>
<div class="price"><span>5.16</span><span>▲0.04</span><span>0.78%</span></div>
<div>${ord(sell)}</div><div class="split"></div>
<div class="sec" style="padding-top:1px">${ord(buy)}</div>
<div class="sec" style="padding-top:3px">${st(s1)}</div>
<div class="sec" style="padding-bottom:5px">${st(s2)}</div>
<div class="sec" style="padding-top:1.5px;padding-bottom:2.5px">${flow}</div>
<div>${ticks}</div>`});

/* ---------- side toolbar ---------- */
reg('tdx-sidebar',()=>{
 const box=(inner,stroke='#3b8fe8')=>`<rect x="2.5" y="3.5" width="21" height="20" fill="#fff" stroke="${stroke}" stroke-width="1.4"/>${inner}`;
 const txt=(t,c,sz=12,w=400)=>`<text x="13" y="14" fill="${c}" font-size="${sz}" font-weight="${w}" text-anchor="middle" dominant-baseline="central">${t}</text>`;
 const ic={
 left:`<path d="M2 13l10-8v4.5h12v7H12V21z" fill="#eef6ff" stroke="#3b8fe8" stroke-width="1.5"/>`,
 up:`<path d="M13 2l9 10h-5v12H9V12H4z" fill="#eef6ff" stroke="#3b8fe8" stroke-width="1.5"/>`,
 down:`<path d="M13 24l9-10h-5V2H9v12H4z" fill="#eef6ff" stroke="#3b8fe8" stroke-width="1.5"/>`,
 tbl:box(`<path d="M6 7h6M14 7h6" stroke="#e02020" stroke-width="2"/><path d="M6 11h6M14 11h6" stroke="#20a040" stroke-width="2"/><path d="M6 15h6" stroke="#e02020" stroke-width="2"/><circle cx="18" cy="18" r="4.5" fill="#eee" stroke="#777"/><path d="M16 18l2 2 3-4" stroke="#444" fill="none"/>`),
 grid:box([6,10,14,18].map((y,j)=>[6,11,16].map(x=>`<rect x="${x}" y="${y}" width="4" height="2.4" fill="${['#e02020','#2060d0','#20a040','#e02020'][j]}"/>`).join('')).join('')),
 line:box(`<path d="M5 19l5-6 3 3 4-6 3 2 2-3" fill="none" stroke="#e02020" stroke-width="1.7"/>`),
 cdl:box(`<path d="M8 6v15M14 4v14M19 8v12" stroke="#222" stroke-width="1"/><rect x="6" y="10" width="4" height="7" fill="#e02020"/><rect x="12" y="7" width="4" height="7" fill="#0a9a30"/><rect x="17" y="11" width="4" height="6" fill="#e02020"/>`),
 doc:`<rect x="7" y="2" width="17" height="17" fill="#f4f8ff" stroke="#6aa2e0"/><rect x="2.5" y="6.5" width="18" height="18" fill="#fff" stroke="#3b8fe8"/><path d="M6 12h11M6 16h11M6 20h11" stroke="#777" stroke-width="1.6" stroke-dasharray="3 1"/>`,
 f10:box(txt('F10','#2060b0',13)),
 tree:box(`<rect x="6" y="6" width="6" height="4" fill="#e0b020"/><rect x="13" y="12" width="6" height="4" fill="#e0b020"/><rect x="13" y="18" width="6" height="3" fill="#e0b020"/><path d="M9 10v9h4M9 14h4" fill="none" stroke="#2070c0"/>`),
 zi:box(txt('自','#f07020',17)),
 f12:box(txt('F12','#2060b0',13)),
 fx:`<rect x="2.5" y="3.5" width="21" height="20" rx="6" fill="#fff" stroke="#30a0a0" stroke-width="1.5"/>`+txt('f(x)','#2050a0',11,700),
 circ:box(`<circle cx="13" cy="13.5" r="5" fill="none" stroke="#2060c0" stroke-width="2"/>`),
 wave:box(`<path d="M4 10l3-2 3 3 3-3 3 3 3-3 3 2" fill="none" stroke="#e02060" stroke-width="1.5"/><path d="M4 17l3-2 3 3 3-3 3 3 3-3 3 2" fill="none" stroke="#3050d0" stroke-width="1.5"/>`),
 rsi:txt('RSI','#3040a0',14,700),
 dollar:txt('$','#d03030',24,700),
 move:`<path d="M13 2l4 4h-2.5v5.5H20V9l4 4-4 4v-2.5h-5.500V20H17l-4 4-4-4h2.500v-5.500H6V17l-4-4 4-4v2.500h5.500V6H9z" fill="#1050c0"/>`,
 pen:`<path d="M20 3l4 4L9 22l-6 2 2-6z" fill="#f0b030" stroke="#a07030"/><path d="M3 24l2-6 4 4z" fill="#e8d0b0"/><path d="M20 3l4 4-2 2-4-4z" fill="#e06040"/>`,
 fs:box(txt('FS','#2060b0',14)),
 ref:box(`<path d="M7 12a6 6 0 0 1 11-2l2-1v6h-6l2-2a3.500 3.500 0 0 0-6 0z" fill="#40b060"/><path d="M19 16a6 6 0 0 1-11 2l-2 1v-5h5l-1 2a3.500 3.500 0 0 0 6 0z" fill="#70c040"/>`)};
 const S=k=>`<div class="c"><svg width="26" height="26" viewBox="0 0 26 26">${ic[k]}</svg></div>`;
 const W=(t,cl='')=>`<div class="c w ${cl}">${t}</div>`;
 const sep='<div class="sep"></div>';
 const seq=['left','up','down','tbl','grid','line','cdl','doc','f10','tree','zi','f12','fx','circ'].map(S).join('')+sep+['wave','rsi','dollar','move','pen'].map(S).join('')+sep+['fs','ref'].map(S).join('')+['1','5','15','30','60'].map(t=>W(t)).join('')+W('日','sel')+['周','月','N','多','季','年'].map(t=>W(t)).join('');
 return `<style>
:host{display:block;width:37px;height:1360px;box-sizing:border-box;background:#f0f0f0;border-left:1px solid #a8a8a8;margin-top:-1px;font:19px ${FONT};color:#1a4a9c;overflow:hidden}
.c{height:34.5px;display:flex;align-items:center;justify-content:center;box-sizing:border-box}
.sep{height:12.5px;display:flex;align-items:center;padding:0 4px}
.sep::before{content:"";display:block;width:100%;border-top:2px solid #b8b8b8}
.sel{background:#f6f6f6;border-top:1.5px solid #a8a8a8;border-left:1.5px solid #a8a8a8;border-bottom:1px solid #fff;margin-left:2px}
</style>${seq}`});

/* ---------- status bar ---------- */
reg('tdx-statusbar',()=>{
 const row=[['上证',54,'l'],['3195.46',101,'r'],['13.30',76,'r'],['0.42%',86,'r'],['4137<u>亿</u>',94,'k'],['沪深',54,'l'],['4089.57',107,'r'],['6.39',70,'r'],['0.16%',85,'r'],['2227<u>亿</u>',97,'k'],['创业',54,'l'],['2458.26',102,'r'],['29.30',74,'r'],['1.21%',85,'r'],['1581<u>亿</u>',98,'k']];
 const it=row.map(([t,w,k])=>k=='l'?`<span class="lb" style="width:${w}px">${t}</span>`:k=='r'?`<span class="num" style="width:${w}px">${t}</span>`:`<span class="blk" style="width:${w}px">${t}</span>`).join('');
 return `<style>
:host{display:flex;align-items:center;height:36px;box-sizing:border-box;background:#f0f0f0;border-top:2px solid ${AX};font-family:${FONT};white-space:nowrap;box-shadow:inset 0 1px 0 #fff;overflow:hidden;position:relative;}
span{flex:none;display:block}
.ico{width:25px;display:flex;justify-content:center;flex:none;padding-right:2px;box-sizing:border-box}
.lb{font-size:24px;color:#333}.num{font-size:21px;font-weight:700;color:#f01010}.blk{font-size:21px;font-weight:700;color:#111}
u{text-decoration:none;font-size:24px;font-weight:400;color:#333}
.sepv{width:1px;height:30px;background:#b0b0b0;margin-right:3px;flex:none}
</style><div class="ico"><svg width="20" height="20" viewBox="0 0 20 20"><rect x="1" y="1" width="18" height="18" rx="3" fill="#f3b93a" stroke="#c88a20"/><rect x="5" y="5" width="10" height="10" fill="#fbe6a0" stroke="#c88a20"/></svg></div>
${it}<div class="sepv"></div><span class="lb" style="width:83px">总成交</span><span class="blk">8</span>`});

/* ---------- overlays ---------- */
reg('tdx-ime',()=>`<style>
:host{position:absolute;left:0;top:904px;width:157px;height:24px;box-sizing:border-box;background:#ece9d8;border:1px solid #fff;border-right-color:#77756a;border-bottom-color:#77756a;padding:2px 3px;display:flex;gap:1px;z-index:3;font:16px "Noto Sans CJK SC",sans-serif;color:#111}
div{background:#c0c0c0;border:1px solid;border-color:#fff #555 #555 #fff;box-sizing:border-box;display:flex;align-items:center;justify-content:center;height:19px;flex:none;line-height:1}
</style><div style="width:19px;color:#a01010;font-family:'Liberation Serif',serif;font-weight:700">A</div><div style="width:72px">极品五笔</div>
<div style="width:19px"><svg width="13" height="13" viewBox="0 0 13 13"><path d="M9 1c1 5-2 8-7 8 2 3 8 4 10-1 1-3 0-6-3-7z" fill="#111"/></svg></div>
<div style="width:19px;font-weight:700;font-size:13px;align-items:flex-start">·,</div>
<div style="width:19px"><svg width="15" height="12" viewBox="0 0 15 12"><rect width="15" height="12" fill="#9a9a9a"/><path d="M1 2h13M1 5h13M1 8h13" stroke="#eee" stroke-width="1.6" stroke-dasharray="2 1"/></svg></div>`);
reg('tdx-banner',()=>`<style>
:host{position:absolute;left:1360px;top:1314px;width:800px;height:81px;background:linear-gradient(180deg,#7ba8d8,#82addc);z-index:4;display:flex;align-items:center;overflow:hidden}
.cn{font:900 56px "Noto Sans CJK SC",sans-serif;color:#14148e;margin-left:16px;width:287px;flex:none;white-space:nowrap;line-height:1}
.logo{flex:none;margin:0 0 0 20px;display:block}
.url{font:700 48px "DejaVu Serif",serif;color:#fff;margin-left:32px;white-space:nowrap;line-height:1}
</style><span class="cn">公式指标网</span>
<svg class="logo" width="78" height="78" viewBox="0 0 78 78"><defs><path id="arc" d="M5 46A34 34 0 0 0 38 73"/></defs>
<path d="M4.500 36A35 35 0 0 1 73.500 36" fill="none" stroke="#dc6450" stroke-width="8"/>
<path d="M73.500 42A35 35 0 0 1 39 74" fill="none" stroke="#ecc94c" stroke-width="8"/>
<path d="M39 74A35 35 0 0 1 6 48" fill="none" stroke="#ecc94c" stroke-width="2"/>
<path d="M33 2h12v8h-3v4h8l5 3v18h-9V22h-2v14H34V22h-2v13h-9V17l5-3h8v-4h-3z" fill="#eac84c"/>
<path d="M24 38h30v6H44v4h14v6H44v3l10 13-7 4-8-11-8 11-7-4 10-13v-3H20v-6h14v-4H24z" fill="#eac84c"/>
<text font-size="8" fill="#fff" font-weight="700"><textPath href="#arc" startOffset="0">www.9m8.cn</textPath></text></svg>
<span class="url">www.9m8.cn</span>`);
</script>
</body></html>
